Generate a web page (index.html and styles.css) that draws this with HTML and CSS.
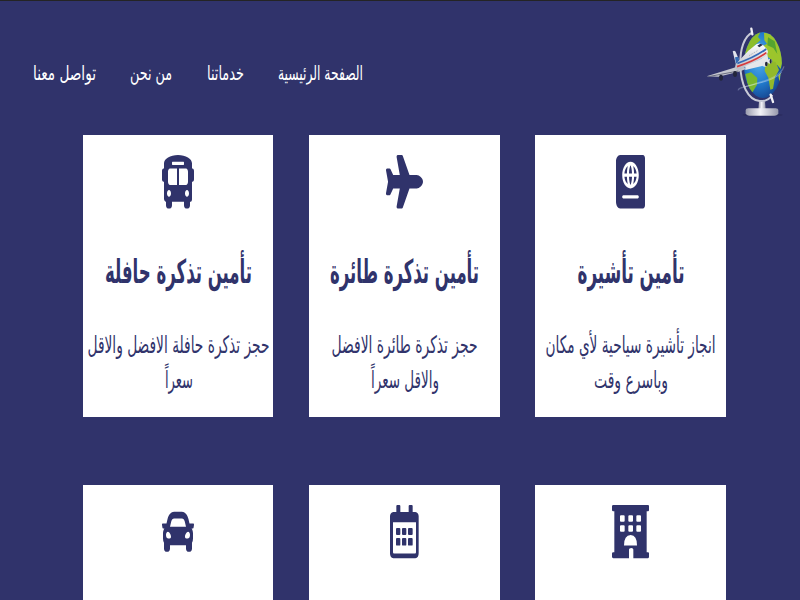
FILE: index.html
```
<!DOCTYPE html>
<html lang="ar" dir="rtl">
<head>
<meta charset="utf-8">
<title>خدمات السفر</title>
<link rel="stylesheet" href="styles.css">
</head>
<body>
<header class="header">
  <svg class="logo" viewBox="0 0 300 315">
    <defs>
      <radialGradient id="sea" cx=".4" cy=".4" r=".65"><stop offset="0" stop-color="#55b4ef"/><stop offset=".6" stop-color="#2179cb"/><stop offset="1" stop-color="#16458f"/></radialGradient>
      <linearGradient id="metal"><stop offset="0" stop-color="#9a9cae"/><stop offset=".45" stop-color="#f3f3f7"/><stop offset="1" stop-color="#9698ab"/></linearGradient>
      <linearGradient id="body" x2="0" y2="1"><stop offset="0" stop-color="#fff"/><stop offset="1" stop-color="#b8bac4"/></linearGradient>
      <clipPath id="globe"><ellipse cx="189" cy="135" rx="57" ry="99"/></clipPath>
    </defs>
    <ellipse cx="188" cy="285" rx="60" ry="5" fill="#2b2d60"/>
    <path d="M177 244h18l2 25h-22z" fill="url(#metal)"/>
    <path d="M137 270q0-5 8-5h82q8 0 8 5v10q-2 7-12 7h-74q-10 0-12-7z" fill="url(#metal)"/>
    <ellipse cx="189" cy="135" rx="57" ry="99" fill="url(#sea)"/>
    <g clip-path="url(#globe)">
      <path d="M130 96l14-34 20-24 18-3-8 16 8 9-18 16-10 24-13 4z" fill="#8cbd2a"/>
      <path d="M192 38l26 5 20 30 12 40-8 34-10-12-8 6-8-20-12-10-18-14 2-18 13-8-8-10z" fill="#9cc52c"/>
      <path d="M207 122l20 4 10 24-12 22-6 34-8 3-6-36-11-20 2-18z" fill="#92b92b"/>
      <path d="M136 162l17-5 19 17-1 20-13 22-8 1-8-27z" fill="#79b82e"/>
      <path d="M204 52l20 12 8 38-12-18-18-8z" fill="#54a42f"/>
      <path d="M235 168l7-10-3 28z" fill="#a9c334"/>
    </g>
    <path d="M158 37c-26 11-38 51-37 97 1 58 22 106 58 109 19 2 31-7 38-18" fill="none" stroke="#c8cad7" stroke-width="6"/>
    <path d="M154 26l3 17M212 224l7 22" stroke="#f1f1f5" stroke-width="7" stroke-linecap="round"/>
    <path d="M252 139c-11 34-60 43-91 54-28 10-47 9-46 18" fill="none" stroke="#d9ecff" stroke-width="4" opacity=".3"/>
    <path d="M245 157c-20 24-67 32-110 43" fill="none" stroke="#fff" stroke-width="2" opacity=".5"/>
    <path d="M98 94q4-4 8 0l14 31-12 9z" fill="#e2e4ed"/>
    <path d="M105 112l10-2 4 16-11 7z" fill="#356bb4"/>
    <path d="M20 169l82-26 19-7 17 11-22 8-61 15z" fill="#c5c7cf"/>
    <path d="M25 170l90-17" stroke="#6b6e80" stroke-width="3"/>
    <path d="M107 133l38-41 24-19q11-6 20 2l9 9q9 9 4 17-6 10-21 16l-56 30q-16 6-20-5z" fill="url(#body)"/>
    <path d="M112 130q49-16 87-43" fill="none" stroke="#3569b7" stroke-width="5"/>
    <path d="M111 140q56-18 88-42" fill="none" stroke="#d83a3c" stroke-width="5"/>
    <path d="M172 77l9-6 8 3-11 8z" fill="#26304b"/>
    <path d="M147 107l27-16" stroke="#8a90a2" stroke-width="2" stroke-dasharray="3 3"/>
    <path d="M136 138l48-22 18-14 4 24-20 12-50 12z" fill="#e5e6ea"/>
    <g fill="#e3e4e9"><circle cx="194" cy="131" r="9"/><circle cx="209" cy="124" r="7"/></g>
    <g fill="#23263c"><ellipse cx="199" cy="132" rx="4" ry="7"/><ellipse cx="212" cy="124" rx="3" ry="7"/><ellipse cx="63" cy="173" rx="6" ry="9"/><ellipse cx="105" cy="162" rx="6" ry="9"/></g>
  </svg>
  <nav class="nav">
    <a><svg class="text nav-text" width="85" height="40"><text x="42.5" y="25" textLength="85" lengthAdjust="spacingAndGlyphs">الصفحة الرئيسية</text></svg></a>
    <a><svg class="text nav-text" width="37" height="40"><text x="18.5" y="25" textLength="37" lengthAdjust="spacingAndGlyphs">خدماتنا</text></svg></a>
    <a><svg class="text nav-text" width="42" height="40"><text x="21" y="25" textLength="42" lengthAdjust="spacingAndGlyphs">من نحن</text></svg></a>
    <a><svg class="text nav-text" width="63" height="40"><text x="31.5" y="25" textLength="63" lengthAdjust="spacingAndGlyphs">تواصل معنا</text></svg></a>
  </nav>
</header>
<main class="cards">
  <article class="card">
    <svg class="icon" width="29" height="53.5" viewBox="0 0 448 512" preserveAspectRatio="none"><path d="M129.62 176h39.09c1.49-27.03 6.54-51.35 14.21-70.41-27.71 13.24-48.02 39.19-53.3 70.41zm0 32c5.29 31.22 25.59 57.17 53.3 70.41-7.68-19.06-12.72-43.38-14.21-70.41h-39.09zM224 286.69c7.69-7.45 20.77-34.42 23.43-78.69h-46.87c2.67 44.26 15.75 71.24 23.44 78.69zM200.57 176h46.87c-2.66-44.26-15.74-71.24-23.43-78.69-7.7 7.45-20.78 34.43-23.44 78.69zm64.51 102.41c27.71-13.24 48.02-39.19 53.3-70.41h-39.09c-1.49 27.03-6.53 51.35-14.21 70.41zM416 0H64C28.65 0 0 28.65 0 64v384c0 35.35 28.65 64 64 64h352c17.67 0 32-14.33 32-32V32c0-17.67-14.33-32-32-32zm-80 416H112c-8.8 0-16-7.2-16-16s7.2-16 16-16h224c8.8 0 16 7.2 16 16s-7.2 16-16 16zm-112-96c-70.69 0-128-57.31-128-128S153.31 64 224 64s128 57.31 128 128-57.31 128-128 128zm41.08-214.41c7.68 19.06 12.72 43.38 14.21 70.41h39.09c-5.28-31.22-25.59-57.17-53.3-70.41z"/></svg>
    <h2><svg class="text title" width="190" height="60"><text x="95" y="38" textLength="107" lengthAdjust="spacingAndGlyphs">تأمين تأشيرة</text></svg></h2>
    <p><svg class="text desc" width="190" height="80"><text x="94.5" y="27" textLength="170" lengthAdjust="spacingAndGlyphs">انجاز تأشيرة سياحية لأي مكان</text><text x="95" y="62" textLength="74" lengthAdjust="spacingAndGlyphs">وباسرع وقت</text></svg></p>
  </article>
  <article class="card">
    <svg class="icon" width="37" height="53.5" viewBox="0 0 576 512" preserveAspectRatio="none"><path d="M480 192H365.71L260.61 8.06A16.014 16.014 0 0 0 246.71 0h-65.5c-10.63 0-18.3 10.17-15.38 20.39L214.86 192H112l-43.2-57.6c-3.02-4.03-7.77-6.4-12.8-6.4H16.01C5.6 128-2.04 137.78.49 147.88L32 256 .49 364.12C-2.04 374.22 5.6 384 16.01 384H56c5.04 0 9.78-2.37 12.8-6.4L112 320h102.86l-49.03 171.6c-2.92 10.22 4.75 20.4 15.38 20.4h65.5c5.74 0 11.04-3.08 13.89-8.06L365.71 320H480c35.35 0 96-28.65 96-64s-60.65-64-96-64z"/></svg>
    <h2><svg class="text title" width="190" height="60"><text x="95.5" y="38" textLength="149" lengthAdjust="spacingAndGlyphs">تأمين تذكرة طائرة</text></svg></h2>
    <p><svg class="text desc" width="190" height="80"><text x="95.5" y="27" textLength="146" lengthAdjust="spacingAndGlyphs">حجز تذكرة طائرة الافضل</text><text x="96" y="62" textLength="68" lengthAdjust="spacingAndGlyphs">والاقل سعراً</text></svg></p>
  </article>
  <article class="card">
    <svg class="icon" width="32" height="53.5" viewBox="0 0 512 512" preserveAspectRatio="none"><path fill-rule="evenodd" d="M488 128h-8V80c0-44.8-99.2-80-224-80S32 35.2 32 80v48h-8c-13.25 0-24 10.74-24 24v80c0 13.25 10.75 24 24 24h8v160c0 17.67 14.33 32 32 32v32c0 17.67 14.33 32 32 32h32c17.67 0 32-14.33 32-32v-32h192v32c0 17.67 14.33 32 32 32h32c17.67 0 32-14.33 32-32v-32h6.4c16 0 25.6-12.8 25.6-25.6V256h8c13.25 0 24-10.75 24-24v-80c0-13.26-10.75-24-24-24zM160 72c0-4.42 3.58-8 8-8h176c4.42 0 8 3.58 8 8v16c0 4.42-3.58 8-8 8H168c-4.42 0-8-3.58-8-8V72zm-48 328c-17.67 0-32-14.33-32-32s14.33-32 32-32 32 14.33 32 32-14.33 32-32 32zm128-112H128c-17.67 0-32-14.33-32-32v-96c0-17.67 14.33-32 32-32h112v160zm32 0V128h112c17.67 0 32 14.33 32 32v96c0 17.67-14.33 32-32 32H272zm128 112c-17.67 0-32-14.33-32-32s14.33-32 32-32 32 14.33 32 32-14.33 32-32 32z"/></svg>
    <h2><svg class="text title" width="190" height="60"><text x="95.5" y="38" textLength="147" lengthAdjust="spacingAndGlyphs">تأمين تذكرة حافلة</text></svg></h2>
    <p><svg class="text desc" width="190" height="80"><text x="95.5" y="27" textLength="182" lengthAdjust="spacingAndGlyphs">حجز تذكرة حافلة الافضل والاقل</text><text x="96" y="62" textLength="28" lengthAdjust="spacingAndGlyphs">سعراً</text></svg></p>
  </article>
  <article class="card">
    <svg class="icon" width="37" height="53.5" viewBox="0 0 111 162" preserveAspectRatio="none"><path fill-rule="evenodd" d="M4 0h104q3 0 3 4v11q0 4-3 4h-4v124h4q3 0 3 4v10q0 4-3 4H64v-26q0-5-6-5-7 0-7 5v26H4q-4 0-4-4v-10q0-4 4-4h3V19H4q-4 0-4-4V4q0-4 4-4zM27 31q-3 0-3 3v14q0 3 3 3h8q3 0 3-3V34q0-3-3-3zm25 0q-3 0-3 3v14q0 3 3 3h8q3 0 3-3V34q0-3-3-3zm24 0q-3 0-3 3v14q0 3 3 3h8q3 0 3-3V34q0-3-3-3zM27 61q-3 0-3 3v14q0 3 3 3h8q3 0 3-3V64q0-3-3-3zm25 0q-3 0-3 3v14q0 3 3 3h8q3 0 3-3V64q0-3-3-3zm24 0q-3 0-3 3v14q0 3 3 3h8q3 0 3-3V64q0-3-3-3zM36 123h39q0-32-19-32-20 0-20 32z"/></svg>
  </article>
  <article class="card">
    <svg class="icon" width="29" height="53.5" viewBox="0 0 87 162" preserveAspectRatio="none"><path fill-rule="evenodd" d="M19 3q0-3 3-3h6q3 0 3 3v18h25V3q0-3 3-3h6q3 0 3 3v18h8q10 2 10 13v112q0 14-10 15H10Q0 160 0 146V34q0-11 10-13h9zM9 52v91q0 4 3 4h63q3 0 3-4V52zM21 70h7q3 0 3 3v15q0 3-3 3h-7q-3 0-3-3V73q0-3 3-3zm18 0h7q3 0 3 3v15q0 3-3 3h-7q-3 0-3-3V73q0-3 3-3zm18 0h8q3 0 3 3v15q0 3-3 3h-8q-3 0-3-3V73q0-3 3-3zM21 100h7q3 0 3 3v17q0 3-3 3h-7q-3 0-3-3v-17q0-3 3-3zm18 0h7q3 0 3 3v17q0 3-3 3h-7q-3 0-3-3v-17q0-3 3-3zm18 0h8q3 0 3 3v17q0 3-3 3h-8q-3 0-3-3v-17q0-3 3-3z"/></svg>
  </article>
  <article class="card">
    <svg class="icon" width="32" height="53.5" viewBox="0 0 512 512" preserveAspectRatio="none"><path d="M499.99 176h-59.87l-16.64-41.6C406.38 91.63 365.57 64 319.5 64h-127c-46.06 0-86.88 27.63-103.99 70.4L71.87 176H12.01C4.2 176-1.53 183.34.37 190.91l6 24C7.7 220.25 12.5 224 18.01 224h20.07C24.65 235.73 16 252.78 16 272v48c0 16.12 6.16 30.67 16 41.93V416c0 17.67 14.33 32 32 32h32c17.67 0 32-14.33 32-32v-32h256v32c0 17.67 14.33 32 32 32h32c17.67 0 32-14.33 32-32v-54.07c9.84-11.25 16-25.8 16-41.93v-48c0-19.22-8.65-36.27-22.07-48H494c5.51 0 10.31-3.75 11.64-9.09l6-24c1.89-7.57-3.84-14.91-11.65-14.91zm-352.06-17.83c7.29-18.22 24.94-30.17 44.57-30.17h127c19.63 0 37.28 11.95 44.57 30.17L384 208H128l19.93-49.83zM96 319.8c-19.2 0-32-12.76-32-31.9S76.8 256 96 256s48 28.71 48 47.85-28.8 15.95-48 15.95zm320 0c-19.2 0-48 3.19-48-15.95S396.8 256 416 256s32 12.76 32 31.9-12.8 31.9-32 31.9z"/></svg>
  </article>
</main>
</body>
</html>
```
FILE: styles.css
```
* { box-sizing: border-box; }
html { overflow: hidden; }
body {
  margin: 0;
  height: 600px;
  overflow: hidden;
  background: #30336b;
  border-top: 1px solid #242424;
  font-family: "DejaVu Sans", sans-serif;
}
h2, p { margin: 0; }
.header {
  display: flex;
  justify-content: space-between;
  height: 134px;
  padding: 19px 0 0 33px;
}
.logo { width: 100px; height: 105px; }
.nav {
  display: flex;
  gap: 34.3px;
  padding-top: 35px;
}
.text {
  display: block;
  direction: rtl;
  fill: #30336b;
  text-anchor: middle;
  overflow: visible;
}
.nav-text { fill: #fff; font-size: 20px; }
.title { font-size: 33px; font-weight: 700; }
.desc { font-size: 24px; }
.cards {
  display: grid;
  grid-template-columns: 191px 191px 190px;
  grid-template-rows: 282px 115px;
  gap: 68px 35.5px;
  padding-right: 74px;
}
.card {
  display: flex;
  flex-direction: column;
  align-items: center;
  padding-top: 20px;
  background: #fff;
}
.icon { display: block; flex: none; fill: #30336b; }
.card h2 { margin-top: 36px; height: 60px; }
.card p { margin-top: 21px; }
```
